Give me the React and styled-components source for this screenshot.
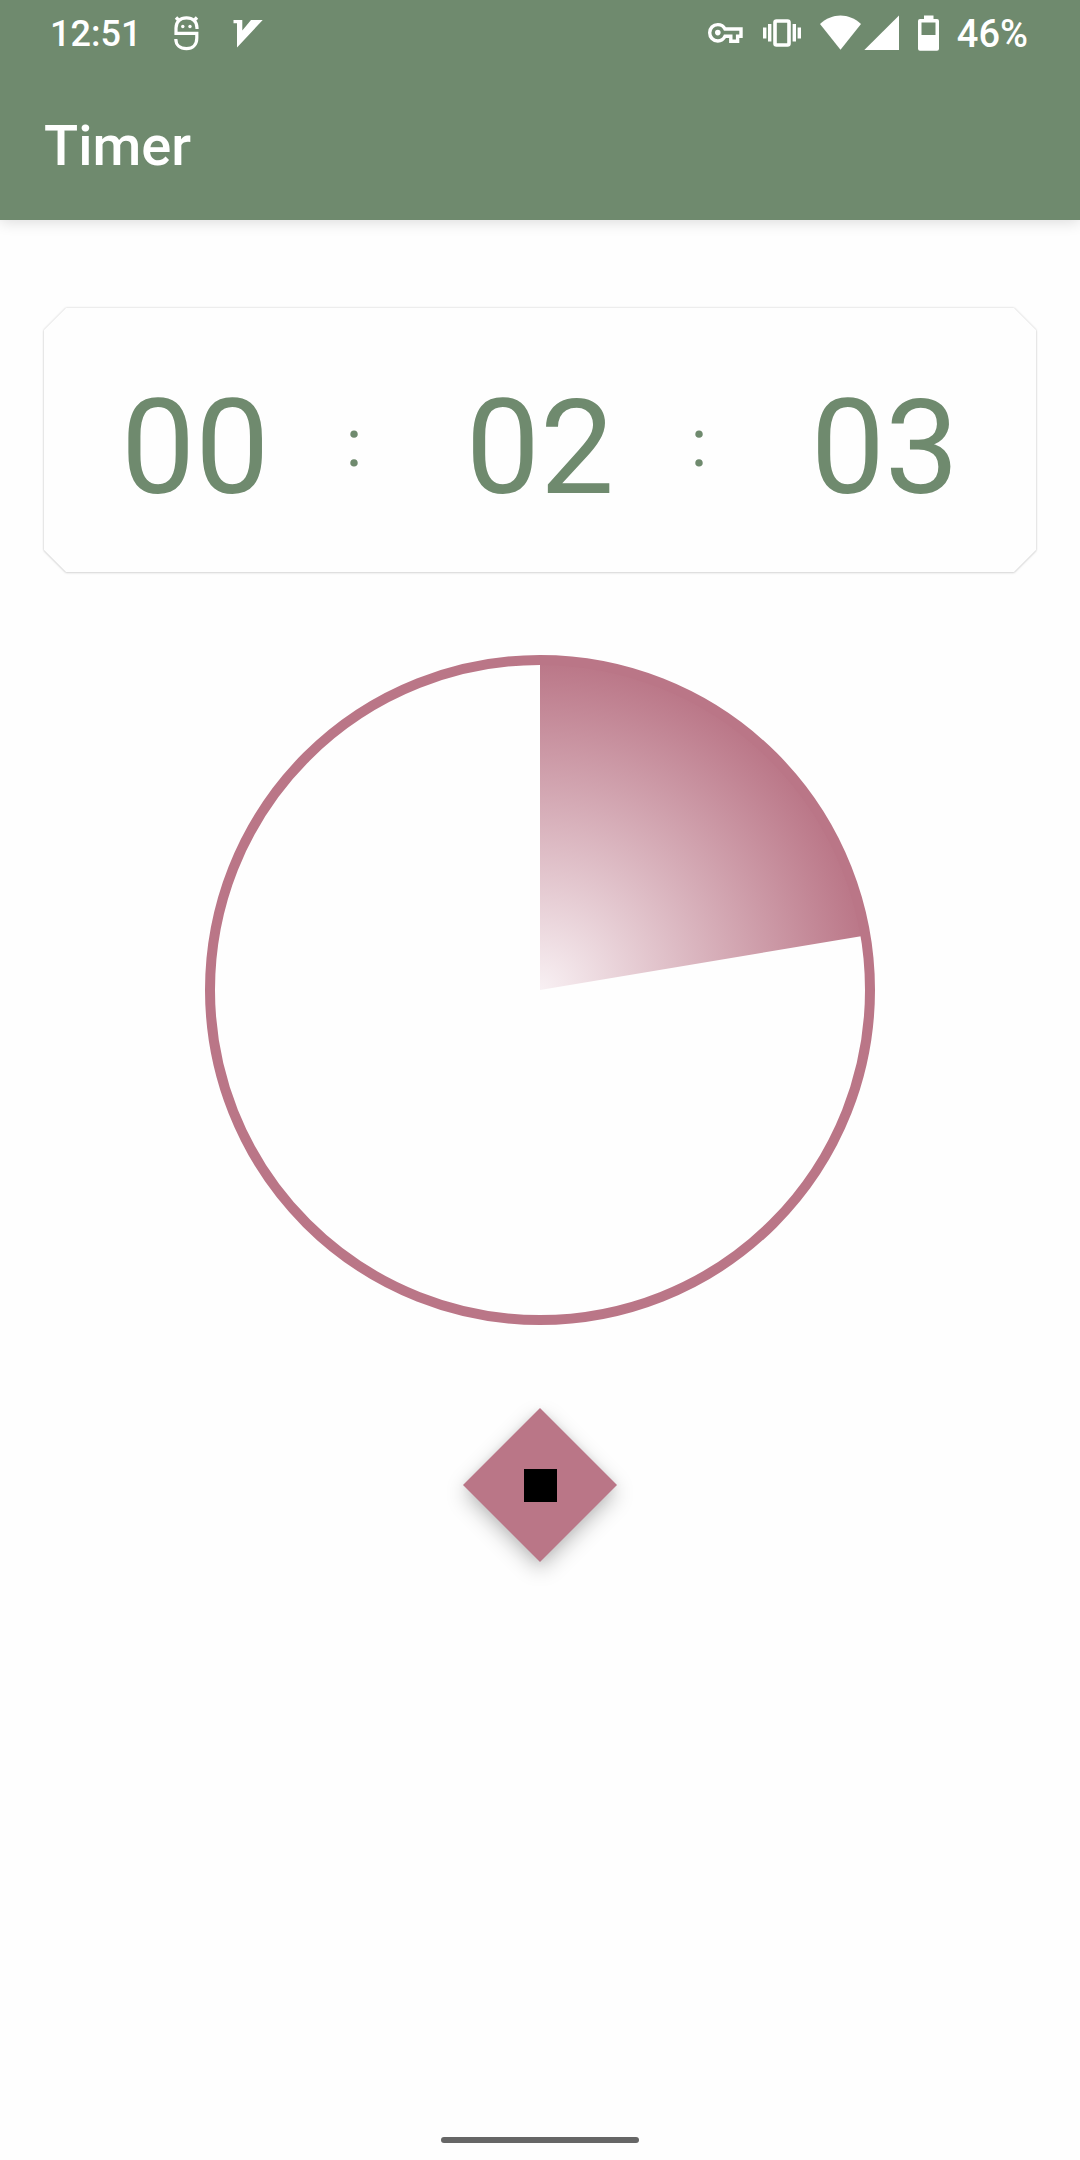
import React from "react";
import styled, { createGlobalStyle } from "styled-components";

const GREEN = "#6f8a6e";
const ROSE = "#ba7687";

const GlobalStyle = createGlobalStyle`
  *, *::before, *::after { box-sizing: border-box; }
  body { margin: 0; background: #fefefe; }
`;

const Page = styled.div`
  display: flex;
  flex-direction: column;
  min-height: 100vh;
  background: #fefefe;
  font-family: Roboto, "Noto Sans", sans-serif;
`;

const Header = styled.header`
  height: 220px;
  background: ${GREEN};
  color: #fff;
  box-shadow: 0 2px 14px rgba(0, 0, 0, 0.14);
`;

const StatusBar = styled.div`
  display: flex;
  align-items: center;
  justify-content: space-between;
  height: 68px;
  padding: 0 52px 0 50px;
`;

const StatusGroup = styled.div`
  display: flex;
  align-items: center;
  gap: ${(p) => p.$gap}px;
`;

const StatusText = styled.span`
  min-width: 76px;
  font-size: ${(p) => p.$size}px;
  line-height: 40px;
  font-weight: 500;
  text-align: right;
`;

const StatusIcon = styled.svg`
  display: block;
  flex: none;
  height: 40px;
`;

const Title = styled.h1`
  margin: 0;
  padding: 44px 44px 0;
  font-size: 56px;
  line-height: 68px;
  font-weight: 500;
`;

const Main = styled.main`
  display: flex;
  flex-direction: column;
  align-items: center;
  padding: 88px 44px 0;
`;

const CardShadow = styled.section`
  width: 100%;
  filter: drop-shadow(0 0 1px rgba(0, 0, 0, 0.18)) drop-shadow(0 1px 1px rgba(0, 0, 0, 0.1));
`;

const Card = styled.div`
  display: flex;
  align-items: center;
  height: 264px;
  padding: 16px 77px 0;
  background: #fefefe;
  color: ${GREEN};
  clip-path: polygon(
    22px 0, calc(100% - 22px) 0, 100% 22px, 100% calc(100% - 22px),
    calc(100% - 22px) 100%, 22px 100%, 0 calc(100% - 22px), 0 22px
  );
`;

const Digits = styled.span`
  font-size: 132px;
  line-height: 156px;
`;

const Colon = styled.span`
  flex: 1;
  padding: 0 27px 8px 0;
  font-size: 66px;
  line-height: 78px;
  text-align: center;
`;

const Dial = styled.svg`
  display: block;
  width: 670px;
  max-width: 100%;
  margin-top: 83px;
`;

const ButtonShadow = styled.div`
  margin-top: 83px;
  filter: drop-shadow(0 8px 10px rgba(0, 0, 0, 0.24)) drop-shadow(0 0 4px rgba(0, 0, 0, 0.06));
`;

const StopButton = styled.button`
  display: grid;
  place-items: center;
  width: 154px;
  height: 154px;
  padding: 0;
  border: 0;
  background: ${ROSE};
  clip-path: polygon(50% 0, 100% 50%, 50% 100%, 0 50%);
  cursor: pointer;
`;

const StopGlyph = styled.span`
  width: 33px;
  height: 33px;
  background: #000;
`;

const NavBar = styled.footer`
  display: flex;
  justify-content: center;
  margin-top: auto;
  padding: 17px 0;
`;

const HomeHandle = styled.div`
  width: 198px;
  height: 6px;
  border-radius: 3px;
  background: #666;
`;

const GhostIcon = () => (
  <StatusIcon width="26" viewBox="172 14 26 40" fill="none" stroke="#fff" aria-hidden="true">
    <path d="M195 29 V28 C195 21.5 190.5 17.8 184.5 17.8 C178 17.8 174 22 174 28 V33.3 H194.8 V38 C194.8 45 190.5 48.7 184.5 48.7 C178 48.7 173.8 45 173.8 39" strokeWidth="3.2" />
    <path d="M174 17.5 L178 21.5 M195 17.5 L191 21.5" strokeWidth="3.4" />
    <circle cx="180.8" cy="26.5" r="1.7" fill="#fff" stroke="none" />
    <circle cx="188" cy="26.5" r="1.7" fill="#fff" stroke="none" />
  </StatusIcon>
);

const VIcon = () => (
  <StatusIcon width="30" viewBox="231 14 30 40" fill="#fff" aria-hidden="true">
    <path d="M231.5 20 H240.3 V30.5 L249 20 H260.7 L235 47.5 V23.3 H231.5 Z" />
  </StatusIcon>
);

const KeyIcon = () => (
  <StatusIcon width="36" viewBox="708 14 36 40" fill="none" stroke="#fff" aria-hidden="true">
    <path d="M725 29 H741 V36.3 H737.6 V41.3 H730.8 V36.3 H725 C723.5 39.3 721 41 717.8 41 C713 41 709.7 37.2 709.7 32.7 C709.7 28.2 713 24.6 717.8 24.6 C721 24.6 723.6 26.2 725 29 Z" strokeWidth="3.4" />
    <circle cx="717.8" cy="32.6" r="2.8" fill="#fff" stroke="none" />
  </StatusIcon>
);

const VibrateIcon = () => (
  <StatusIcon width="38" viewBox="762 14 38 40" fill="#fff" aria-hidden="true">
    <rect x="774" y="21" width="14" height="24" rx="1.5" fill="none" stroke="#fff" strokeWidth="3.6" />
    <rect x="762" y="27.5" width="3.4" height="11" />
    <rect x="767" y="24" width="3.4" height="17.5" />
    <rect x="791.6" y="24" width="3.4" height="17.5" />
    <rect x="796.6" y="27.5" width="3.4" height="11" />
  </StatusIcon>
);

const WifiIcon = () => (
  <StatusIcon width="41" viewBox="820 14 41 40" fill="#fff" aria-hidden="true">
    <path d="M840.5 49.8 L820 24 C832 12.5 849 12.5 861 24 Z" />
  </StatusIcon>
);

const SignalIcon = () => (
  <StatusIcon width="35" viewBox="864 14 35 40" fill="#fff" aria-hidden="true">
    <path d="M899 15.5 V50 H864.3 Z" />
  </StatusIcon>
);

const BatteryIcon = () => (
  <StatusIcon width="22" viewBox="919 14 22 40" fill="#fff" aria-hidden="true">
    <path fillRule="evenodd" d="M925 15.5 H934.5 V19 H938 Q940 19 940 21 V48.8 Q940 50.8 938 50.8 H921 Q919 50.8 919 48.8 V21 Q919 19 921 19 H925 Z M922.5 22.5 V35 H936.5 V22.5 Z" />
  </StatusIcon>
);

const CENTER = 335;
const RADIUS = 330;

// Filled slice running clockwise from twelve o'clock.
function slicePath(degrees) {
  const angle = (degrees * Math.PI) / 180;
  const x = CENTER + RADIUS * Math.sin(angle);
  const y = CENTER - RADIUS * Math.cos(angle);
  const large = degrees > 180 ? 1 : 0;
  return `M${CENTER} ${CENTER} V${CENTER - RADIUS} A${RADIUS} ${RADIUS} 0 ${large} 1 ${x} ${y} Z`;
}

function TimerDial({ degrees }) {
  return (
    <Dial viewBox="0 0 670 670" role="img" aria-label="Time remaining">
      <defs>
        <radialGradient id="slice" gradientUnits="userSpaceOnUse" cx={CENTER} cy={CENTER} r={RADIUS}>
          <stop offset="0" stopColor="#f8f0f3" />
          <stop offset="1" stopColor={ROSE} />
        </radialGradient>
      </defs>
      <path d={slicePath(degrees)} fill="url(#slice)" />
      <circle cx={CENTER} cy={CENTER} r={RADIUS} fill="none" stroke={ROSE} strokeWidth="10" />
    </Dial>
  );
}

export default function App() {
  return (
    <Page>
      <GlobalStyle />
      <Header>
        <StatusBar>
          <StatusGroup $gap={33}>
            <StatusText $size={36}>12:51</StatusText>
            <GhostIcon />
            <VIcon />
          </StatusGroup>
          <StatusGroup $gap={19}>
            <KeyIcon />
            <VibrateIcon />
            <StatusGroup $gap={3}>
              <WifiIcon />
              <SignalIcon />
            </StatusGroup>
            <StatusGroup $gap={12}>
              <BatteryIcon />
              <StatusText $size={38}>46%</StatusText>
            </StatusGroup>
          </StatusGroup>
        </StatusBar>
        <Title>Timer</Title>
      </Header>
      <Main>
        <CardShadow>
          <Card>
            <Digits>00</Digits>
            <Colon>:</Colon>
            <Digits>02</Digits>
            <Colon>:</Colon>
            <Digits>03</Digits>
          </Card>
        </CardShadow>
        <TimerDial degrees={80.5} />
        <ButtonShadow>
          <StopButton type="button" aria-label="Stop">
            <StopGlyph />
          </StopButton>
        </ButtonShadow>
      </Main>
      <NavBar>
        <HomeHandle />
      </NavBar>
    </Page>
  );
}
